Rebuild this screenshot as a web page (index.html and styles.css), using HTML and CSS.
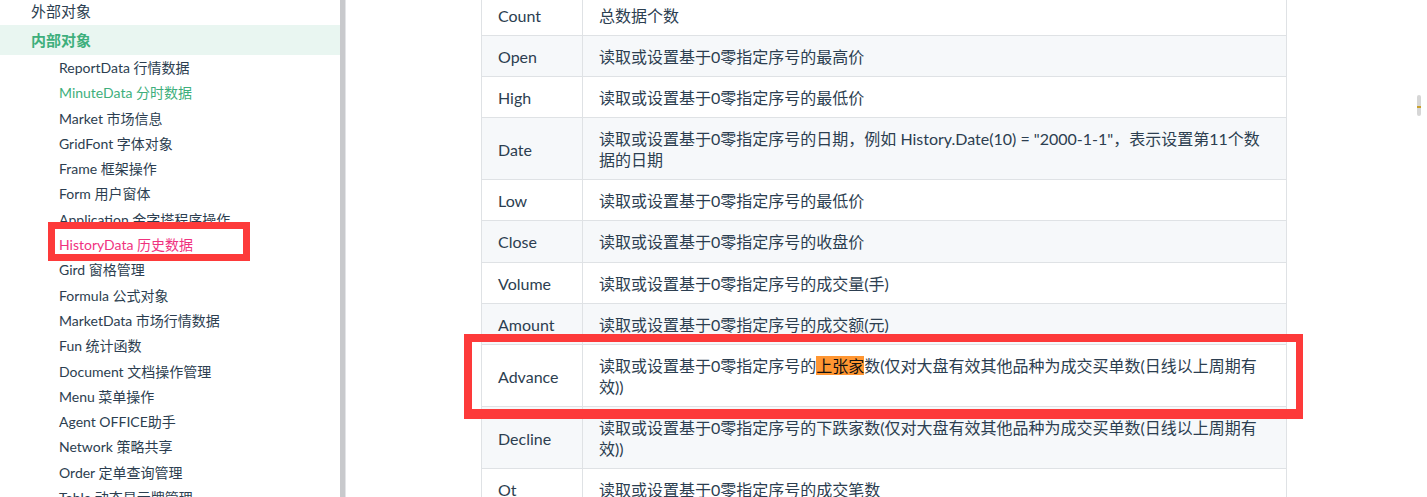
FILE: index.html
```html
<!DOCTYPE html>
<html lang="zh-CN">
<head>
<meta charset="utf-8">
<title>HistoryData 历史数据</title>
<link rel="stylesheet" href="styles.css">
</head>
<body>
<div class="layout">
  <aside class="sidebar">
    <div class="group-title first">外部对象</div>
    <div class="group-title active">内部对象</div>
    <ul class="sub">
      <li><a>ReportData 行情数据</a></li>
      <li><a class="green">MinuteData 分时数据</a></li>
      <li><a>Market 市场信息</a></li>
      <li><a>GridFont 字体对象</a></li>
      <li><a>Frame 框架操作</a></li>
      <li><a>Form 用户窗体</a></li>
      <li><a>Application 金字塔程序操作</a></li>
      <li><a class="pink">HistoryData 历史数据</a></li>
      <li><a>Gird 窗格管理</a></li>
      <li><a>Formula 公式对象</a></li>
      <li><a>MarketData 市场行情数据</a></li>
      <li><a>Fun 统计函数</a></li>
      <li><a>Document 文档操作管理</a></li>
      <li><a>Menu 菜单操作</a></li>
      <li><a>Agent OFFICE助手</a></li>
      <li><a>Network 策略共享</a></li>
      <li><a>Order 定单查询管理</a></li>
      <li><a>Table 动态显示牌管理</a></li>
    </ul>
  </aside>
  <div class="scroll-track"></div>
  <main class="main">
    <table class="props">
      <colgroup><col class="c1"><col></colgroup>
      <tbody>
        <tr><td>Count</td><td class="desc">总数据个数</td></tr>
        <tr><td>Open</td><td class="desc">读取或设置基于0零指定序号的最高价</td></tr>
        <tr><td>High</td><td class="desc">读取或设置基于0零指定序号的最低价</td></tr>
        <tr><td>Date</td><td class="desc">读取或设置基于0零指定序号的日期，例如 History.Date(10) = "2000-1-1"，表示设置第11个数<br>据的日期</td></tr>
        <tr><td>Low</td><td class="desc">读取或设置基于0零指定序号的最低价</td></tr>
        <tr><td>Close</td><td class="desc">读取或设置基于0零指定序号的收盘价</td></tr>
        <tr><td>Volume</td><td class="desc">读取或设置基于0零指定序号的成交量(手)</td></tr>
        <tr><td>Amount</td><td class="desc">读取或设置基于0零指定序号的成交额(元)</td></tr>
        <tr><td>Advance</td><td class="desc">读取或设置基于0零指定序号的<mark class="find">上张家</mark>数(仅对大盘有效其他品种为成交买单数(日线以上周期有<br>效))</td></tr>
        <tr><td>Decline</td><td class="desc">读取或设置基于0零指定序号的下跌家数(仅对大盘有效其他品种为成交买单数(日线以上周期有<br>效))</td></tr>
        <tr><td>Ot</td><td class="desc">读取或设置基于0零指定序号的成交笔数</td></tr>
      </tbody>
    </table>
  </main>
  <div class="mark-box mark-side"></div>
  <div class="mark-box mark-main"></div>
  <div class="page-thumb"><span class="thumb-hit"></span></div>
</div>
</body>
</html>
```

FILE: styles.css
```css
html, body {
  margin: 0;
  padding: 0;
  background: #fff;
}

body {
  font-family: "Lato", "Noto Sans CJK SC", sans-serif;
  color: #2c3e50;
  height: 497px;
  overflow: hidden;
}

.layout {
  position: relative;
  display: flex;
  height: 497px;
  overflow: hidden;
}

/* ---------- sidebar ---------- */
.sidebar {
  width: 340px;
  flex: none;
  overflow: hidden;
}

.group-title {
  font-size: 15px;
  line-height: 28.5px;
  padding-left: 31px;
  color: #2c3e50;
}

.group-title.first {
  margin-top: -3.5px;
}

.group-title.active {
  line-height: 30px;
  background: #e9f6f1;
  color: #3eaf7c;
  font-weight: 700;
}

.sub {
  list-style: none;
  margin: 0;
  padding: 0;
}

.sub a {
  display: block;
  font-size: 14px;
  line-height: 25.3px;
  padding-left: 59px;
  color: #2c3e50;
  white-space: nowrap;
}

.sub a.green {
  color: #3eaf7c;
}

.sub a.pink {
  color: #f0337f;
}

.scroll-track {
  width: 5px;
  flex: none;
  background: #c8c9cc;
}

/* ---------- main ---------- */
.main {
  flex: 1;
  min-width: 0;
  border-left: 1px solid #e3e4e7;
  overflow: hidden;
}

.props {
  border-collapse: collapse;
  table-layout: fixed;
  width: 806px;
  margin: -6.5px 0 0 135px;
  font-size: 16px;
}

.props col.c1 {
  width: 101px;
}

.props td {
  border: 1px solid #dfe2e5;
  padding: 10px 16px 9.2px;
  line-height: 21px;
  vertical-align: middle;
}

.props td.desc {
  white-space: nowrap;
}

.props tr:nth-child(2n) {
  background: #f6f8fa;
}

.find {
  background: #ff9632;
  color: #111;
}

/* ---------- annotation overlays ---------- */
.mark-box {
  position: absolute;
  box-sizing: border-box;
  border: 7px solid #fd3a3a;
}

.mark-side {
  left: 48px;
  top: 222px;
  width: 202px;
  height: 39px;
}

.mark-main {
  left: 464px;
  top: 334px;
  width: 839px;
  height: 85px;
  border-width: 8px 7px 10px 8px;
}

.page-thumb {
  position: absolute;
  left: 1417px;
  top: 95px;
  width: 4px;
  height: 21px;
  border-radius: 2px;
  background: #d6d6d6;
}

.thumb-hit {
  position: absolute;
  left: 0;
  right: 0;
  top: 11px;
  height: 2px;
  background: #c9a02c;
}
```
